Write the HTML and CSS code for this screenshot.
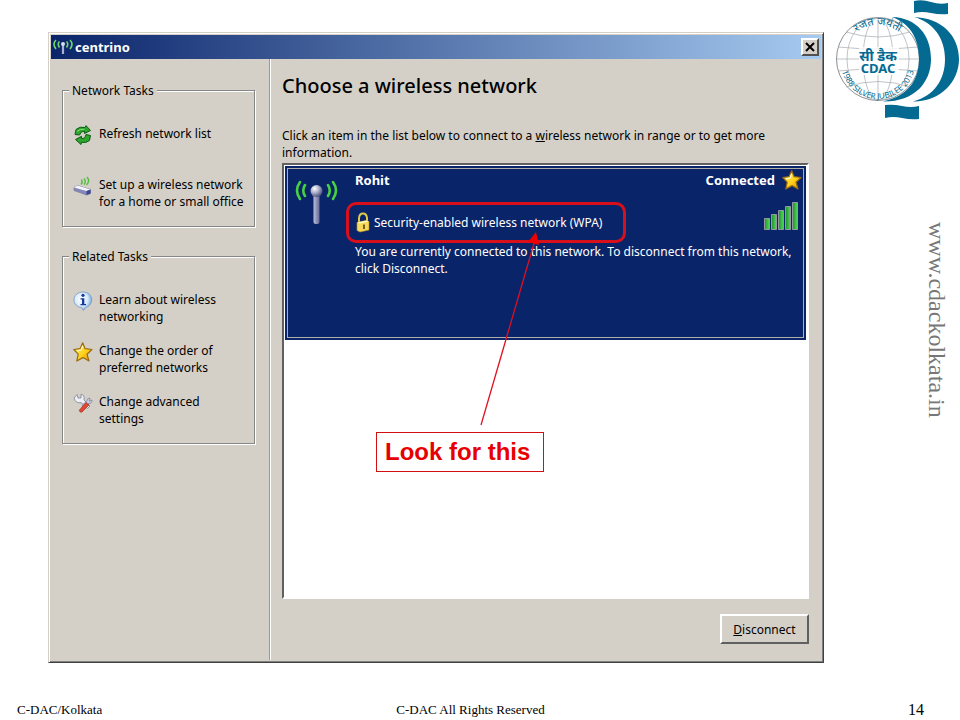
FILE: index.html
```html
<!DOCTYPE html>
<html lang="en">
<head>
<meta charset="utf-8">
<title>Choose a wireless network</title>
<link rel="stylesheet" href="styles.css">
</head>
<body>
<svg class="defs" aria-hidden="true">
  <defs>
    <linearGradient id="gold" x1="0" y1="0" x2="1" y2="1"><stop offset="0" stop-color="#fff27a"/><stop offset=".55" stop-color="#ffd21c"/><stop offset="1" stop-color="#d98a00"/></linearGradient>
    <linearGradient id="metal" x1="0" y1="0" x2="1" y2="0"><stop offset="0" stop-color="#b9bde0"/><stop offset="1" stop-color="#666a94"/></linearGradient>
    <linearGradient id="bar" x1="0" y1="0" x2="1" y2="0"><stop offset="0" stop-color="#1f8f2b"/><stop offset="1" stop-color="#55d858"/></linearGradient>
    <radialGradient id="ball" cx=".35" cy=".3" r=".7"><stop offset="0" stop-color="#fff"/><stop offset=".5" stop-color="#aeb0cc"/><stop offset="1" stop-color="#50547e"/></radialGradient>
    <radialGradient id="bubble" cx=".4" cy=".4" r=".6"><stop offset="0" stop-color="#fff"/><stop offset=".65" stop-color="#d4e8fa"/><stop offset="1" stop-color="#79a9dc"/></radialGradient>
    <symbol id="star" viewBox="0 0 20 20"><path d="M9.700 .8 12.100 6.700 19 7.500 14 12.200 16 19 10 15.600 3.800 19 5.200 12.200.8 7.500 7 6.700Z" fill="url(#gold)" stroke="#9a6a10" stroke-width="1.200" stroke-linejoin="round"/><path d="M9.700 4 8 8 4 8.800" fill="none" stroke="#fffbd0" stroke-width="1.200"/></symbol>
  </defs>
</svg>
<div class="slide">
  <main class="stage">
    <section class="window" aria-label="centrino">
      <header class="titlebar">
        <svg class="title-icon" viewBox="0 0 20 18" aria-hidden="true"><g fill="none" stroke="#6fd66a" stroke-width="1.600"><path d="M3 2Q-1 6 3 11M6.500 3.500Q4 6 6.500 9.500M17 2Q21 6 17 11M13.500 3.500Q16 6 13.500 9.500"/></g><path d="M10 7V16" stroke="#aab0d4" stroke-width="2.200"/><circle cx="10" cy="6" r="2" fill="#d9dcf0"/></svg>
        <span class="title">centrino</span>
        <button class="close" type="button" aria-label="Close"><svg viewBox="0 0 10 10" aria-hidden="true"><path d="M1 1 9 9M9 1 1 9" stroke="#000" stroke-width="2"/></svg></button>
      </header>
      <div class="panes">
        <nav class="tasks">
          <fieldset class="group">
            <legend>Network Tasks</legend>
            <a class="task task-refresh" href="#refresh">
              <svg viewBox="0 0 20 20" aria-hidden="true"><g fill="#2ea52e" stroke="#0d5c12" stroke-width="1" stroke-linejoin="round"><path d="M2 9.500 3 4.500Q7 1 12 2.500L13 .6 17.500 5.500 11.500 8.500 11.500 6.300Q8 5.500 6.500 10Z"/><path d="M17.500 10.500 16.500 15.500Q13 18.500 8.500 17.300L8 19.500 2.500 14.500 8.500 11.300 8.500 13.500Q12 14 13 9.500Z"/></g><path d="M4 6.500Q7 3.500 11.500 4.300" fill="none" stroke="#86e27c" stroke-width="1"/></svg>
              <span>Refresh network list</span></a>
            <a class="task" href="#setup">
              <svg viewBox="0 0 20 20" aria-hidden="true"><path d="M1 11.500 4.500 9.500 17.500 13.500V17.500L13.500 19 1 14.500Z" fill="#8388b8" stroke="#777b9e" stroke-width=".7"/><path d="M1 11.500 4.500 9.500 17.500 13.500 13.500 15Z" fill="#f5f6fd"/><path d="M13.500 15 17.500 13.500V17.500L13.500 19Z" fill="#3f4690"/><path d="M8 8.500Q10 6.500 8.500 3.500M11 8.500Q13.500 5.500 11 2.500M13.500 9Q17.500 5 14 1" fill="none" stroke="#53bb3f" stroke-width="1.400"/></svg>
              <span>Set up a wireless network<br>for a home or small office</span></a>
          </fieldset>
          <fieldset class="group group-related">
            <legend>Related Tasks</legend>
            <a class="task" href="#learn">
              <svg viewBox="0 0 20 20" aria-hidden="true"><path d="M10 1C15 1 18.700 4.200 18.700 8.800 18.700 13 15.500 15.800 13 16.300L10.500 19.500 8.500 16.500C4 16 1 13 1 8.800 1 4.200 5 1 10 1Z" fill="url(#bubble)" stroke="#7d9cc4" stroke-width=".9"/><circle cx="10" cy="4.300" r="1.600" fill="#1637a0"/><path d="M7.500 7.300H11.300V13H13V14.300H7.500V13H9V8.600H7.500Z" fill="#1637a0"/></svg>
              <span>Learn about wireless<br>networking</span></a>
            <a class="task" href="#order">
              <svg viewBox="0 0 20 20" aria-hidden="true"><use href="#star"/></svg>
              <span>Change the order of<br>preferred networks</span></a>
            <a class="task" href="#advanced">
              <svg viewBox="0 0 20 20" aria-hidden="true"><path d="M1 5 4 1.500 5 5 8 5 8 1.200Q12 2 11 7L17 13 14.500 15.500 8 9.500Q3 11 1 5Z" fill="#eef0f6" stroke="#858a9b" stroke-width=".9"/><path d="M19 7Q19 11 15.500 10.500L10.500 14 9 12 13.500 8.500Q14 5 17 5L16.500 8Z" fill="#c5cbdd" stroke="#7d8296" stroke-width=".7"/><path d="M13 9.500 16 12 9 19Q7 20 6.300 17.300Z" fill="#e04a32" stroke="#a12c1e" stroke-width=".7"/></svg>
              <span>Change advanced<br>settings</span></a>
          </fieldset>
        </nav>
        <div class="content">
          <h1>Choose a wireless network</h1>
          <p class="hint">Click an item in the list below to connect to a <u>w</u>ireless network in range or to get more<br>information.</p>
          <div class="list">
            <article class="network">
              <svg class="antenna" viewBox="0 0 44 46" aria-hidden="true"><g fill="none" stroke="#48d044" stroke-width="2.600" stroke-linecap="round"><path d="M5 2Q-1 10.500 5 19M10 5Q6.500 10.500 10 16M38 2Q44 10.500 38 19M33 5Q36.500 10.500 33 16"/></g><rect x="18.500" y="14" width="6" height="30" rx="2" fill="url(#metal)"/><circle cx="21.500" cy="11" r="6" fill="url(#ball)"/></svg>
              <div class="details">
                <div class="row row-name"><strong>Rohit</strong><strong class="state">Connected</strong><svg class="star" viewBox="0 0 20 20" aria-hidden="true"><use href="#star"/></svg></div>
                <div class="row row-security">
                  <div class="highlight"><svg class="lock" viewBox="0 0 14 21" aria-hidden="true"><path d="M3 11V6Q3.500 1.500 7 1.500 10.500 1.500 11 6V9" fill="none" stroke="#dfc94d" stroke-width="2"/><path d="M1 10.500 10 8.500 13 9.500V18L4 20 1 18.500Z" fill="#f4d95c" stroke="#b88b1c" stroke-width=".6"/><path d="M1 10.500 10 8.500 13 9.500 4 11.500Z" fill="#fff9b8"/><path d="M8 12.500V17" stroke="#6b5210" stroke-width="1.800"/></svg><span>Security-enabled wireless network (WPA)</span></div>
                  <svg class="signal" viewBox="0 0 35 28" aria-hidden="true"><g fill="url(#bar)" stroke="#8f9ba0" stroke-width="1"><path d="M.5 16.500H5.500V27.500H.5Z"/><path d="M7.500 12.500H12.500V27.500H7.500Z"/><path d="M14.500 8.500H19.500V27.500H14.500Z"/><path d="M21.500 4.500H26.500V27.500H21.500Z"/><path d="M28.500 .5H33.500V27.500H28.500Z"/></g></svg>
                </div>
                <p class="message">You are currently connected to this network. To disconnect from this network,<br>click Disconnect.</p>
              </div>
            </article>
            <svg class="arrow" viewBox="0 0 60 194" aria-hidden="true"><path d="M1 193 55 8" stroke="#e01020" stroke-width="1.300"/><path d="M56 0 59 13 48 10Z" fill="#f00000"/></svg>
            <div class="callout">Look for this</div>
          </div>
          <div class="actions"><button class="disconnect" type="button"><u>D</u>isconnect</button></div>
        </div>
      </div>
    </section>
    <aside class="brand">
      <svg class="logo" viewBox="832 0 128 122" role="img" aria-label="CDAC">
        <defs><path id="arc-top" d="M847 45A34 34 0 0 1 909 45"/><path id="arc-bottom" d="M841 62A37 37 0 0 0 915 62"/></defs>
        <circle cx="878" cy="59" r="41.500" fill="#fff" stroke="#8b9196" stroke-width="1"/>
        <g fill="none" stroke="#a5abaf" stroke-width=".7"><ellipse cx="878" cy="59" rx="15" ry="41"/><ellipse cx="878" cy="59" rx="31" ry="41"/><path d="M878 18V100M837 59H919M846 32Q878 42 910 32M846 87Q878 76 910 87M838 47Q878 51 918 47M838 71Q878 67 918 71"/></g>
        <path d="M859 47H899V75H859Z" fill="#fff" opacity=".8"/>
        <g fill="#046a91"><path d="M892 17C917 18 931 35 931 59S914 102 883 101.500C907 96 919 81 919 59S909 23 892 17Z"/><path d="M914 17C942 18 959 36 959 59S940 102 913 101.500C934 96 945 80 945 59S933 22 914 17Z"/><path d="M914 1Q922 -1 931 2T948 3V14Q940 15 931 13T914 13Z"/><path d="M885 105Q893 104 902 106T919 106V119Q911 120 902 118T885 118Z"/></g>
        <g class="logo-text" text-anchor="middle"><text class="logo-hindi" x="878" y="61">सी डैक</text><text class="logo-name" x="878" y="73">CDAC</text><text class="logo-arc"><textPath href="#arc-top" startOffset="50%">रजत जयंती</textPath></text><text class="logo-jubilee"><textPath href="#arc-bottom" startOffset="50%">1988 SILVER JUBILEE 2013</textPath></text></g>
      </svg>
      <a class="site" href="#site">www.cdackolkata.in</a>
    </aside>
  </main>
  <footer class="footer"><span>C-DAC/Kolkata</span><span>C-DAC All Rights Reserved</span><span class="page">14</span></footer>
</div>
</body>
</html>
```

FILE: styles.css
```css
* { box-sizing: border-box; }
body { margin: 0; background: #fff; color: #000; font-family: "Noto Sans", sans-serif; font-size: 12px; line-height: 17px; }
h1, p { margin: 0; }
button { font: inherit; color: inherit; }
svg { display: block; flex: none; }
.defs { position: absolute; width: 0; height: 0; }
.slide { display: flex; flex-direction: column; min-height: 100vh; }
.stage { display: grid; grid-template-columns: minmax(0, 1fr) 128px; gap: 8px; flex: 1; padding-left: 48px; }

.window { display: flex; flex-direction: column; margin-top: 32px; padding: 2px; background: #d4d0c8; border: 1px solid; border-color: #d4d0c8 #404040 #404040 #d4d0c8; box-shadow: inset 1px 1px #fff, inset -1px -1px #808080; }
.titlebar { display: flex; align-items: center; gap: 2px; height: 24px; padding: 0 2px; background: linear-gradient(90deg, #0a246a, #a6caf0); color: #fff; font-size: 13px; font-weight: 700; }
.title-icon { width: 20px; height: 18px; }
.close { display: grid; place-items: center; width: 18px; height: 18px; margin-left: auto; padding: 0; background: #d4d0c8; border: 2px solid; border-color: #fff #505050 #505050 #fff; }
.close svg { width: 10px; height: 10px; }

.panes { display: grid; grid-template-columns: 219px minmax(0, 1fr); flex: 1; }
.tasks { padding: 23px 14px 0 11px; border-right: 1px solid #999; box-shadow: 1px 0 #fff; }
.group { display: flex; flex-direction: column; gap: 17px; margin: 0; padding: 26px 9px 16px 10px; border: 1px solid #868686; box-shadow: 1px 1px #fff, inset 1px 1px #fff; min-width: 0; }
.group legend { padding: 0 3px; margin-left: -4px; background: #d4d0c8; }
.group-related { margin-top: 21px; }
.task { display: flex; gap: 6px; color: inherit; text-decoration: none; white-space: nowrap; }
.task svg { width: 20px; height: 20px; }
.task-refresh { margin-bottom: 14px; }

.content { display: flex; flex-direction: column; padding: 14px 12px 16px; }
h1 { font-size: 20px; line-height: 26px; font-weight: 500; }
.hint { margin-top: 28px; }
.list { position: relative; flex: 1; margin-top: 2px; padding: 1px; background: #fff; border: 2px solid; border-color: #606060 #fff #fff #606060; }
.network { display: flex; min-height: 174px; padding: 3px; background: #0a246a; color: #fff; border: 1px solid #0a246a; outline: 1px solid #b0b0a8; outline-offset: -3px; }
.antenna { width: 44px; height: 46px; margin: 10px 7px 0 6px; }
.details { flex: 1; min-width: 0; }
.row { display: flex; align-items: center; padding-left: 9px; }
.row-name { font-size: 13px; }
.state { margin-left: auto; }
.star { width: 20px; height: 20px; margin-left: 7px; }
.row-security { align-items: flex-start; justify-content: space-between; margin-top: 12px; padding: 0 3px 0 0; }
.highlight { display: flex; align-items: center; gap: 4px; height: 41px; padding: 0 21px 0 7px; border: 3px solid #d8101c; border-radius: 10px; white-space: nowrap; }
.lock { width: 14px; height: 21px; }
.signal { width: 35px; height: 28px; }
.message { padding-left: 9px; white-space: nowrap; }
.arrow { position: absolute; left: 196px; top: 67px; width: 60px; height: 194px; }
.callout { position: absolute; left: 92px; top: 267px; padding: 4px 13px 4px 8px; background: #fff; border: 1px solid #d01010; color: #e60000; font: 700 24px/30px "Liberation Sans", sans-serif; white-space: nowrap; }
.actions { display: flex; justify-content: flex-end; margin-top: 15px; }
.disconnect { width: 89px; height: 30px; padding: 0; background: #d4d0c8; border: 2px solid; border-color: #fff #606060 #606060 #fff; }

.brand { display: flex; flex-direction: column; align-items: flex-end; gap: 100px; }
.logo { width: 128px; height: 122px; }
.logo-text { fill: #046a91; font-family: "Noto Sans", sans-serif; }
.logo-hindi { font-size: 14px; font-weight: 700; }
.logo-name { font-size: 13px; font-weight: 700; }
.logo-arc { font-size: 11px; }
.logo-jubilee { font-size: 8px; }
.site { margin-right: 9px; writing-mode: vertical-rl; color: #777; text-decoration: none; font: 24px/28px "Liberation Serif", serif; }
.footer { display: grid; grid-template-columns: 1fr auto 1fr; align-items: center; padding: 38px 36px 2px 17px; font: 13px/17px "Liberation Serif", serif; }
.page { justify-self: end; font-size: 16px; }
```
